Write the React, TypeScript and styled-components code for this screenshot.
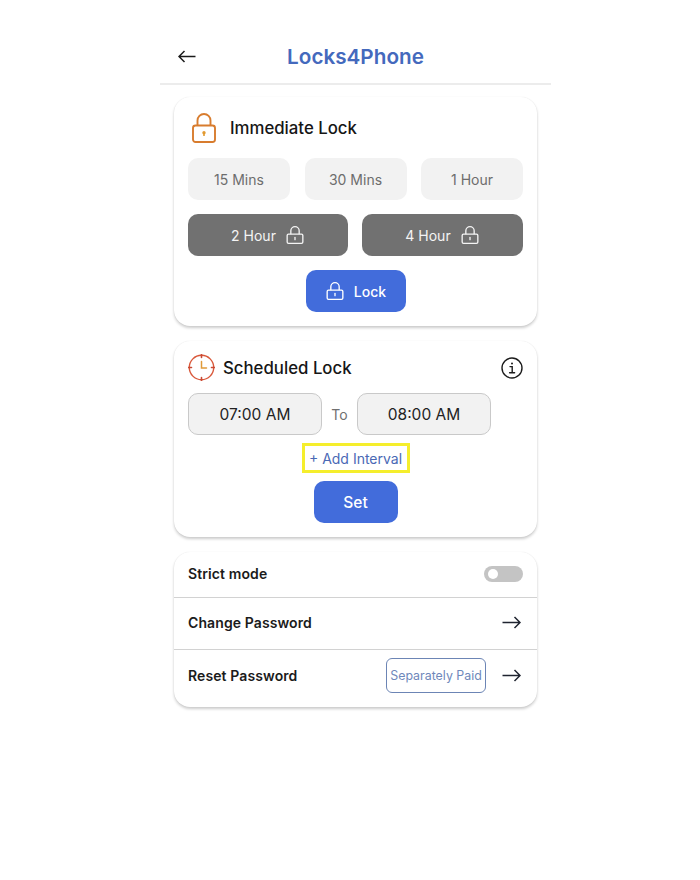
import React from "react";
import styled, { createGlobalStyle } from "styled-components";

const Global = createGlobalStyle`
  html, body { margin: 0; padding: 0; background: #fff; }
  body { font-family: Inter, "Liberation Sans", sans-serif; color: #1a1a1a; }
`;

const Page = styled.div`
  width: 700px;
  height: 880px;
  padding-left: 160px;
  box-sizing: border-box;
  overflow: hidden;
`;

const Phone = styled.div`
  width: 391px;
  display: flex;
  flex-direction: column;
`;

const Header = styled.header`
  height: 85px;
  box-sizing: border-box;
  padding: 0 0 0 18px;
  border-bottom: 2px solid #ececec;
  position: relative;
  display: flex;
  align-items: flex-start;
`;

const BackButton = styled.span`
  display: flex;
  margin-top: 50px;
`;

const Title = styled.h1`
  position: absolute;
  left: 0;
  right: 0;
  top: 43px;
  margin: 0;
  text-align: center;
  font-size: 20.7px;
  line-height: 27px;
  font-weight: 600;
  color: #4469bd;
`;

const Stack = styled.div`
  display: flex;
  flex-direction: column;
  gap: 15px;
  padding: 12px 14px 0;
`;

const Card = styled.section`
  background: #fff;
  border-radius: 16px;
  box-shadow: 0 2px 3px rgba(0, 0, 0, 0.2), 0 0 1px rgba(0, 0, 0, 0.1);
`;

const ImmediateCard = styled(Card)`
  height: 229px;
  box-sizing: border-box;
  padding: 16px 14px 14px;
  display: flex;
  flex-direction: column;
`;

const CardHead = styled.div`
  display: flex;
  align-items: center;
  height: 29px;
  padding-left: 4px;
  gap: 14px;
  margin-bottom: 16px;
`;

const CardTitle = styled.h2`
  margin: 0;
  font-size: 16.8px;
  font-weight: 500;
  color: #161616;
`;

const Row3 = styled.div`
  display: grid;
  grid-template-columns: 102px 102px 102px;
  justify-content: space-between;
  margin-bottom: 14px;
`;

const Row2 = styled.div`
  display: grid;
  grid-template-columns: 160px 161px;
  justify-content: space-between;
  margin-bottom: 14px;
`;

const Chip = styled.div`
  height: 42px;
  border-radius: 10px;
  display: flex;
  align-items: center;
  justify-content: center;
  font-size: 14px;
  background: #f2f2f2;
  color: #6d6d6d;
`;

const DarkChip = styled(Chip)`
  background: #717171;
  color: #f4f4f4;
  gap: 9px;
`;

const Center = styled.div`
  display: flex;
  justify-content: center;
`;

const PrimaryButton = styled.div<{ $w: number }>`
  width: ${(p) => p.$w}px;
  height: 42px;
  border-radius: 10px;
  background: #426cdb;
  color: #fff;
  display: flex;
  align-items: center;
  justify-content: center;
  gap: 9px;
  font-size: 14px;
  font-weight: 500;
`;

const SetButton = styled(PrimaryButton)`
  font-size: 15.5px;
`;

const ScheduledCard = styled(Card)`
  height: 196px;
  box-sizing: border-box;
  padding: 13px 14px 14px;
  display: flex;
  flex-direction: column;
`;

const ScheduleHead = styled.div`
  display: flex;
  align-items: center;
  height: 27px;
  gap: 8px;
  margin-bottom: 12px;
`;

const ScheduleTitle = styled(CardTitle)`
  flex: 1;
`;

const TimeRow = styled.div`
  display: flex;
  align-items: center;
`;

const TimeBox = styled.div`
  width: 134px;
  height: 42px;
  box-sizing: border-box;
  border: 1px solid #c9c9c9;
  border-radius: 10px;
  background: #f2f2f2;
  display: flex;
  align-items: center;
  justify-content: center;
  font-size: 15.5px;
  color: #222;
`;

const ToLabel = styled.span`
  width: 35px;
  text-align: center;
  font-size: 14px;
  color: #707070;
`;

const AddInterval = styled.div`
  width: 108px;
  height: 30px;
  box-sizing: border-box;
  margin: 8px 0;
  border: 3px solid #f5ee2c;
  display: flex;
  align-items: center;
  justify-content: center;
  font-size: 14px;
  white-space: nowrap;
  color: #4a69b5;
`;

const ListRow = styled.div<{ $h: number; $line?: boolean; $lift: number }>`
  height: ${(p) => p.$h}px;
  box-sizing: border-box;
  padding: 0 14px ${(p) => p.$lift}px;
  display: flex;
  align-items: center;
  border-bottom: ${(p) => (p.$line ? "1px solid #d2d2d2" : "none")};
`;

const RowLabel = styled.span`
  flex: 1;
  font-size: 14px;
  font-weight: 600;
  letter-spacing: 0.1px;
  color: #1b1b1b;
`;

const Toggle = styled.div`
  width: 39px;
  height: 16px;
  border-radius: 8px;
  background: #c4c4c4;
  display: flex;
  align-items: center;
  padding-left: 4px;
  box-sizing: border-box;
`;

const Knob = styled.span`
  width: 10px;
  height: 10px;
  border-radius: 50%;
  background: #fff;
`;

const Badge = styled.div`
  width: 100px;
  height: 35px;
  box-sizing: border-box;
  border: 1.5px solid #6c85b5;
  border-radius: 6px;
  display: flex;
  align-items: center;
  justify-content: center;
  font-size: 12.4px;
  white-space: nowrap;
  color: #6f88bb;
  margin-right: 16px;
`;

const ArrowWrap = styled.span`
  display: flex;
  width: 21px;
`;

const LockIcon = ({ size, color, sw = 1.6 }: { size: number; color: string; sw?: number }) => (
  <svg width={size} height={size} viewBox="0 0 24 24" fill="none" stroke={color} strokeWidth={sw} strokeLinejoin="round">
    <path d="M7 11V7a5 5 0 0 1 10 0v4" />
    <rect x="2.6" y="11" width="18.8" height="11" rx="1.6" />
    <path d="M12 15v2.6" strokeLinecap="round" />
  </svg>
);

const OrangeLock = () => (
  <svg width="24" height="30" viewBox="0 0 24 30" fill="none" stroke="#d87c2e" strokeWidth="1.9" strokeLinejoin="round">
    <path d="M5.5 12.5V7.5a6.5 6.5 0 0 1 13 0v5" />
    <rect x="1" y="12.5" width="22" height="16.5" rx="2.5" />
    <circle cx="12" cy="19.8" r="1.7" fill="#e29a30" stroke="none" />
    <path d="M12 20v3" stroke="#e29a30" strokeWidth="1.6" />
  </svg>
);

const ClockIcon = () => (
  <svg width="27" height="27" viewBox="0 0 27 27" fill="none" strokeLinecap="round">
    <circle cx="13.5" cy="13.5" r="12.2" stroke="#d9583a" strokeWidth="1.4" />
    <path d="M13.5 0.5v3M13.5 23.5v3M0.5 13.5H3.5M23.5 13.5h3" stroke="#c94a35" strokeWidth="1.6" />
    <path d="M13.5 7.5v6.5h5" stroke="#e09a3a" strokeWidth="1.5" />
  </svg>
);

const InfoIcon = () => (
  <svg width="22" height="22" viewBox="0 0 22 22" fill="none" stroke="#1c1c1c" strokeWidth="1.4">
    <circle cx="11" cy="11" r="10" />
    <path d="M9 9.6h2.2v6M8.6 15.8h5" strokeLinecap="round" />
    <circle cx="11" cy="6.4" r="1" fill="#1c1c1c" stroke="none" />
  </svg>
);

const BackArrow = () => (
  <svg width="18" height="13" viewBox="0 0 18 13" fill="none" stroke="#1a1a1a" strokeWidth="1.5">
    <path d="M17.5 6.5H1M6.5 1 1 6.5 6.5 12" />
  </svg>
);

const ForwardArrow = () => (
  <svg width="19" height="13" viewBox="0 0 19 13" fill="none" stroke="#1f2430" strokeWidth="1.5">
    <path d="M0.5 6.5H18M12.5 1 18 6.5 12.5 12" />
  </svg>
);

export default function App() {
  return (
    <Page>
      <Global />
      <Phone>
        <Header>
          <BackButton>
            <BackArrow />
          </BackButton>
          <Title>Locks4Phone</Title>
        </Header>
        <Stack>
          <ImmediateCard>
            <CardHead>
              <OrangeLock />
              <CardTitle>Immediate Lock</CardTitle>
            </CardHead>
            <Row3>
              <Chip>15 Mins</Chip>
              <Chip>30 Mins</Chip>
              <Chip>1 Hour</Chip>
            </Row3>
            <Row2>
              <DarkChip>
                2 Hour <LockIcon size={20} color="#f4f4f4" />
              </DarkChip>
              <DarkChip>
                4 Hour <LockIcon size={20} color="#f4f4f4" />
              </DarkChip>
            </Row2>
            <Center>
              <PrimaryButton $w={100}>
                <LockIcon size={20} color="#fff" /> Lock
              </PrimaryButton>
            </Center>
          </ImmediateCard>

          <ScheduledCard>
            <ScheduleHead>
              <ClockIcon />
              <ScheduleTitle>Scheduled Lock</ScheduleTitle>
              <InfoIcon />
            </ScheduleHead>
            <TimeRow>
              <TimeBox>07:00 AM</TimeBox>
              <ToLabel>To</ToLabel>
              <TimeBox>08:00 AM</TimeBox>
            </TimeRow>
            <Center>
              <AddInterval>+ Add Interval</AddInterval>
            </Center>
            <Center>
              <SetButton $w={84}>Set</SetButton>
            </Center>
          </ScheduledCard>

          <Card>
            <ListRow $h={46} $line $lift={2}>
              <RowLabel>Strict mode</RowLabel>
              <Toggle>
                <Knob />
              </Toggle>
            </ListRow>
            <ListRow $h={52} $line $lift={2}>
              <RowLabel>Change Password</RowLabel>
              <ArrowWrap>
                <ForwardArrow />
              </ArrowWrap>
            </ListRow>
            <ListRow $h={57} $lift={6}>
              <RowLabel>Reset Password</RowLabel>
              <Badge>Separately Paid</Badge>
              <ArrowWrap>
                <ForwardArrow />
              </ArrowWrap>
            </ListRow>
          </Card>
        </Stack>
      </Phone>
    </Page>
  );
}
